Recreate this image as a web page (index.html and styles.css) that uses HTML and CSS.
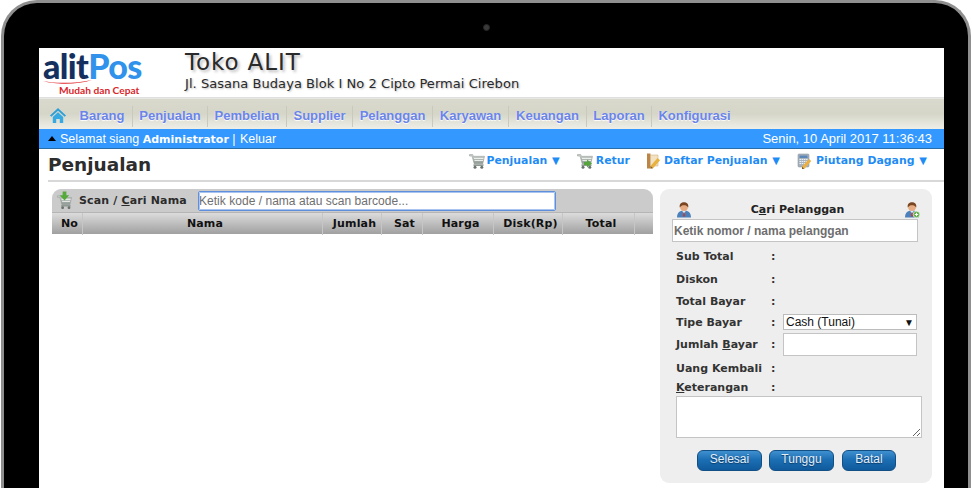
FILE: index.html
```html
<!DOCTYPE html>
<html lang="id">
<head>
<meta charset="utf-8">
<title>alitPos - Penjualan</title>
<link rel="stylesheet" href="styles.css">
</head>
<body>
<svg class="defs" width="0" height="0" aria-hidden="true">
  <defs>
    <linearGradient id="cartg" x1="0" y1="0" x2="0" y2="1"><stop offset="0" stop-color="#d6dad6"/><stop offset="1" stop-color="#8d9892"/></linearGradient>
    <symbol id="cart" viewBox="0 0 16 16">
      <path d="M.5 1.500h3.200l.7 1.800H15.500l-1.700 7.500H5.200L3 3H.5z" fill="url(#cartg)" stroke="#8b938e" stroke-width=".5"/>
      <path d="M5 5.500h9.500M5.500 7.500h8.500" stroke="#f2f3f2" stroke-width=".9"/>
      <path d="M4.500 11.300h10v1.700h-10z" fill="#8f9993"/>
      <circle cx="6" cy="14.200" r="1.500" fill="#69736e"/><circle cx="12.800" cy="14.200" r="1.500" fill="#69736e"/>
    </symbol>
    <symbol id="user" viewBox="0 0 16 16">
      <path d="M1 15.500c0-4.500 2.500-7 7-7s7 2.500 7 7z" fill="#4a80bb"/>
      <path d="M6 8.500l2 3.500 2-3.500z" fill="#dfe9f3"/>
      <path d="M7.400 10.500h1.200l.5 3.500-1.100 1-1.100-1z" fill="#b5433d"/>
      <circle cx="8" cy="5" r="3.900" fill="#e6ad84"/>
      <path d="M3.800 5.500C3 2 5.500.2 8 .2s5 1.800 4.200 5.300C11 3.700 9.800 3.200 8 3.200S5 3.700 3.800 5.500z" fill="#7a4522"/>
    </symbol>
  </defs>
</svg>
<div class="laptop">
  <div class="camera"></div>
  <main class="screen">
    <header class="brand">
      <div class="logo">
        <div class="logo-word"><span class="logo-a">alit</span><span class="logo-b">Pos</span></div>
        <svg class="swoosh" width="50" height="5" viewBox="0 0 50 5"><path d="M0 1C12 3.500 32 3.800 49 0 34 5 12 4.500 0 1z" fill="#e0252b"/></svg>
        <div class="logo-tag">Mudah dan Cepat</div>
      </div>
      <div class="store">
        <div class="store-name">Toko ALIT</div>
        <div class="store-addr">Jl. Sasana Budaya Blok I No 2 Cipto Permai Cirebon</div>
      </div>
    </header>
    <nav class="menu">
      <a class="menu-home" href="#">
        <svg width="16" height="15" viewBox="0 0 16 15"><path d="M8 0 0 7.500l1.300 1.300L8 2.700l6.700 6.100L16 7.500z" fill="#2c9fd8"/><path d="M2.800 9 8 4.300 13.200 9v6H9.800v-4H6.200v4H2.800z" fill="#35a9e2"/></svg>
      </a>
      <a class="menu-item m1" href="#">Barang</a>
      <a class="menu-item m2" href="#">Penjualan</a>
      <a class="menu-item m3" href="#">Pembelian</a>
      <a class="menu-item m4" href="#">Supplier</a>
      <a class="menu-item m5" href="#">Pelanggan</a>
      <a class="menu-item m6" href="#">Karyawan</a>
      <a class="menu-item m7" href="#">Keuangan</a>
      <a class="menu-item m8" href="#">Laporan</a>
      <a class="menu-item m9 last" href="#">Konfigurasi</a>
    </nav>
    <div class="status">
      <div class="status-left"><span class="tri"></span>Selamat siang <b>Administrator</b> <span class="pipe">|</span> Keluar</div>
      <div class="status-right">Senin, 10 April 2017 11:36:43</div>
    </div>
    <div class="title-row">
      <h1>Penjualan</h1>
      <div class="actions">
        <a class="act" href="#"><svg class="ic ic-c" width="16" height="16"><use href="#cart"/></svg>Penjualan <span class="caret">▼</span></a>
        <a class="act" href="#"><svg class="ic" width="16" height="16" viewBox="0 0 16 16"><use href="#cart" width="16" height="16"/><path d="M7 9h3V6.500l5 4-5 4V12H7z" fill="#56a53c"/></svg>Retur</a>
        <a class="act" href="#"><svg class="ic ic-n" width="13" height="16" viewBox="0 0 13 16"><path d="M0 .5h3.500v15H0z" fill="#bb8547"/><path d="M3.500 2H11v11H3.500z" fill="#f2e2c2" stroke="#c9a777" stroke-width=".5"/><path d="M3.500 15.500V13L10.500 5 13 7.200l-7 8z" fill="#e9b23f"/><path d="M3.500 15.500V13L6 15.200z" fill="#7a5a2e"/></svg>Daftar Penjualan <span class="caret">▼</span></a>
        <a class="act" href="#"><svg class="ic ic-n" width="15" height="16" viewBox="0 0 15 16"><rect x="1" y="1" width="11" height="13" rx="1" fill="#a9b3bd" stroke="#7f8a95" stroke-width=".5"/><rect x="2.500" y="2.500" width="8" height="2.500" fill="#5c87b8"/><path d="M2.500 6.500h8M2.500 8.500h8M2.500 10.500h8" stroke="#eef1f4" stroke-width="1" stroke-dasharray="1.500 .7"/><path d="M5 16v-2.500l7-7.500 2.200 2-7 8z" fill="#eab043"/><path d="M5 16v-2.500L7.200 16z" fill="#7a5a2e"/></svg>Piutang Dagang <span class="caret">▼</span></a>
      </div>
    </div>
    <div class="work">
      <section class="sale">
        <div class="scan">
          <svg class="scan-ic" width="15" height="19" viewBox="0 0 16 19"><use href="#cart" width="16" height="16" y="3"/><path d="M6 0h4v4h3L8 9.500 3 4h3z" fill="#55ab3a"/></svg>
          <label class="scan-label" for="scan">Scan / <u>C</u>ari Nama</label>
          <input class="scan-input" id="scan" type="text" placeholder="Ketik kode / nama atau scan barcode...">
        </div>
        <div class="thead">
          <div class="th">No</div>
          <div class="th">Nama</div>
          <div class="th">Jumlah</div>
          <div class="th">Sat</div>
          <div class="th">Harga</div>
          <div class="th">Disk(Rp)</div>
          <div class="th">Total</div>
          <div class="th"></div>
        </div>
      </section>
      <aside class="pay">
        <div class="cust-head">
          <svg width="16" height="16"><use href="#user"/></svg>
          <span class="cust-title">C<u>a</u>ri Pelanggan</span>
          <svg width="16" height="16" viewBox="0 0 16 16"><use href="#user" width="16" height="16"/><circle cx="12.500" cy="12.500" r="3.300" fill="#5fb04a" stroke="#fff" stroke-width=".6"/><path d="M10.800 12.500h3.400M12.500 10.800v3.400" stroke="#fff" stroke-width="1"/></svg>
        </div>
        <input class="cust-input" type="text" placeholder="Ketik nomor / nama pelanggan">
        <div class="row r-sub"><span>Sub Total</span><span>:</span><span></span></div>
        <div class="row r-dis"><span>Diskon</span><span>:</span><span></span></div>
        <div class="row r-tot"><span>Total Bayar</span><span>:</span><span></span></div>
        <div class="row r-tip"><span>Tipe Bayar</span><span>:</span>
          <div class="select"><span>Cash (Tunai)</span><span class="select-caret">▼</span></div>
        </div>
        <div class="row r-jml"><span>Jumlah <u>B</u>ayar</span><span>:</span><input class="pay-input" type="text"></div>
        <div class="row r-uan"><span>Uang Kembali</span><span>:</span><span></span></div>
        <div class="row r-ket"><span><u>K</u>eterangan</span><span>:</span><span></span></div>
        <textarea class="note"></textarea>
        <div class="buttons">
          <button class="btn b-sel" type="button">Selesai</button>
          <button class="btn b-tun" type="button">Tunggu</button>
          <button class="btn b-bat" type="button">Batal</button>
        </div>
      </aside>
    </div>
  </main>
</div>
</body>
</html>
```
FILE: styles.css
```css
* { box-sizing: border-box; }
html, body { margin: 0; height: 488px; overflow: hidden; background: #fff; }
.defs { display: block; height: 0; }
a { text-decoration: none; }

.laptop {
  margin: 0 1px;
  height: 500px;
  padding: 5px 24px 0 35px;
  background: #000;
  border: 3px solid #8f8f8f;
  border-bottom: 0;
  border-radius: 36px 36px 0 0;
}
.camera {
  width: 7px; height: 7px;
  margin: 16px 0 17px 444px;
  border-radius: 50%;
  background: #3a3a3a;
  border: 1px solid #262626;
}
.screen { height: 450px; background: #fff; font-family: "Liberation Sans", Arial, sans-serif; }

/* brand */
.brand { display: flex; height: 49px; }
.logo { width: 146px; padding: 4px 0 0 4px; flex: none; line-height: 1; }
.logo-word { font-family: Lato, sans-serif; font-weight: 900; font-size: 34px; letter-spacing: -.6px; line-height: 28px; height: 28px; white-space: nowrap; }
.logo-a { color: #14305f; }
.logo-b { color: #3192ec; }
.swoosh { display: block; margin-top: 0; }
.logo-tag { font-family: Lato, sans-serif; font-weight: 700; font-size: 10.200px; color: #d9252b; line-height: 11px; margin: 0 0 0 16px; white-space: nowrap; }
.store { font-family: "DejaVu Sans", sans-serif; color: #2a2a2a; padding-top: 1px; }
.store-name { font-size: 23px; letter-spacing: .9px; line-height: 27px; text-shadow: 2px 2px 3px #bbb; }
.store-addr { font-size: 13px; letter-spacing: .05px; line-height: 15px; text-shadow: 1px 1px 2px #bbb; }

/* menu */
.menu {
  display: flex; height: 32px; padding: 8px 0 2px 0;
  border-top: 1px solid #dfdfdf;
  background: linear-gradient(#d9dacd 0, #d5d6c8 50%, #eeeee8 100%);
  box-shadow: inset 0 1px 0 #e6e6e4;
}
.menu-home { width: 33px; padding: 2px 0 0 11px; flex: none; }
.menu-item {
  font-size: 13px; font-weight: 700; color: #6a84ea;
  text-align: center; line-height: 19px;
  border-right: 1px solid #c9c9bd;
  text-shadow: 0 1px 1px #fff;
  flex: none;
}
.m1 { width: 61px; } .m2 { width: 75px; } .m3 { width: 79px; } .m4 { width: 66px; }
.m5 { width: 80px; } .m6 { width: 76px; } .m7 { width: 78px; } .m8 { width: 65px; }
.m9 { width: 85px; }
.last { border-right: 0; }

/* status */
.status {
  display: flex; justify-content: space-between; align-items: center;
  height: 20px; padding: 0 12px 0 9px;
  background: #3398ff; color: #fff; font-size: 13px;
  border-bottom: 1px solid #2a6ea8;
}
.status-left { font-size: 12.500px; }
.status-left b { font-family: "DejaVu Sans", sans-serif; font-size: 11px; }
.tri { display: inline-block; width: 0; height: 0; margin-right: 4px; vertical-align: 2px; border: 4px solid transparent; border-top: 0; border-bottom: 5px solid #000; }
.pipe { margin: 0 1px 0 0; }

/* title */
.title-row { display: flex; justify-content: space-between; height: 33px; margin: 0 0 0 9px; border-bottom: 2px solid #d8d8d8; }
h1 { margin: 0; font-family: "DejaVu Sans", sans-serif; font-size: 18.500px; font-weight: 700; color: #2d2d2d; line-height: 32px; }
.actions { display: flex; font-family: "DejaVu Sans", sans-serif; font-size: 10.900px; font-weight: 700; padding: 4px 17px 0 0; }
.act { color: #1f8cf5; display: flex; margin-left: 17px; line-height: 16px; white-space: pre; }
.ic { margin-right: 3px; flex: none; }
.ic-c { margin-right: 2px; }
.ic-n { margin-right: 4px; }
.caret { font-size: 10px; margin-left: 1px; }

/* work */
.work { display: flex; padding: 7px 12px 0 13px; }
.sale { width: 601px; flex: none; }
.scan { display: flex; align-items: center; height: 23px; background: #cbcbcb; border-radius: 9px 9px 0 0; }
.scan-ic { margin-left: 5px; flex: none; }
.scan-label { font-family: "DejaVu Sans", sans-serif; font-size: 11px; letter-spacing: .15px; font-weight: 700; color: #2b2b2b; margin-left: 7px; width: 119px; flex: none; white-space: nowrap; }
.scan-input { width: 358px; height: 20px; padding: 0; border: 1px solid #5f8fdc; border-radius: 2px; outline: 1px solid #a9c4ee; outline-offset: -2px; font: 12px "Liberation Sans", Arial, sans-serif; letter-spacing: .03px; background: #fff; }
.scan-input::placeholder { color: #6f6f6f; opacity: 1; }

.thead { display: grid; grid-template-columns: 31px 240px 59px 41px 71px 69px 72px 18px; height: 22px; border-top: 1px solid #b5b5b5; background: linear-gradient(#dcdcdc, #a0a0a0); }
.th { font-family: "DejaVu Sans", sans-serif; font-size: 11px; letter-spacing: .15px; font-weight: 700; color: #111; line-height: 22px; text-align: center; padding-left: 5px; border-right: 1px solid #c6c6c6; white-space: nowrap; }
.th:last-child { border-right: 0; }

/* pay panel */
.pay { width: 272px; height: 294px; margin-left: 7px; flex: none; padding: 11px 11px 0 12px; background: #eeeeee; border-radius: 9px; font-family: "DejaVu Sans", sans-serif; font-size: 11px; font-weight: 700; color: #333; }
.cust-head { display: flex; justify-content: space-between; align-items: center; height: 19px; padding: 0 1px 0 4px; }
.cust-title { color: #222; margin-left: -1px; letter-spacing: -.05px; }
.cust-input { display: block; width: 246px; height: 23px; padding: 0 1px; border: 1px solid #c4c4c4; background: #fff; font: 700 12px "Liberation Sans", Arial, sans-serif; }
.cust-input::placeholder { color: #6e6e6e; opacity: 1; }
.row { display: grid; grid-template-columns: 95px 12px 134px; align-items: center; margin-left: 4px; white-space: nowrap; }
.r-sub { height: 22px; margin-top: 3px; }
.r-dis { height: 22px; margin-top: 1px; }
.r-tot { height: 22px; }
.r-tip { height: 20px; }
.r-jml { height: 23px; margin-top: 1px; }
.r-uan { height: 20px; margin-top: 2px; }
.r-ket { height: 18px; }
.select { display: flex; justify-content: space-between; align-items: center; height: 16px; padding: 0 2px; border: 1px solid #bcbcbc; background: #fff; font: 400 12px "Liberation Sans", Arial, sans-serif; color: #111; }
.select-caret { font-size: 10px; color: #111; }
.pay-input { width: 134px; height: 23px; border: 1px solid #c4c4c4; background: #fff; }
.note { display: block; width: 246px; height: 42px; margin: 0 0 0 4px; border: 1px solid #c4c4c4; background: #fff; }
.buttons { display: flex; gap: 7px; padding: 12px 0 0 25px; }
.btn { height: 21px; padding: 0 0 3px; border: 1px solid #124f85; border-radius: 6px; background: linear-gradient(#3f90cf, #1c6fb4 45%, #0f5a9c); color: #e4eef7; font: 12px "Liberation Sans", Arial, sans-serif; text-shadow: 0 1px 1px #0b3a66; }
.b-sel { width: 65px; } .b-tun { width: 65px; } .b-bat { width: 54px; margin-left: 1px; }
```
